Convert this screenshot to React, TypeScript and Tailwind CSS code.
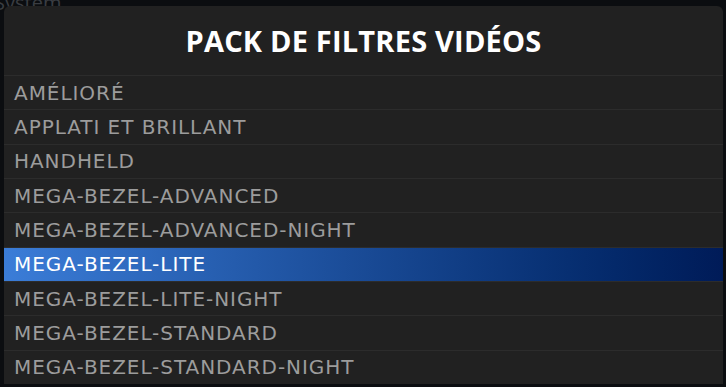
const ITEMS = [
  'AMÉLIORÉ',
  'APPLATI ET BRILLANT',
  'HANDHELD',
  'MEGA-BEZEL-ADVANCED',
  'MEGA-BEZEL-ADVANCED-NIGHT',
  'MEGA-BEZEL-LITE',
  'MEGA-BEZEL-LITE-NIGHT',
  'MEGA-BEZEL-STANDARD',
  'MEGA-BEZEL-STANDARD-NIGHT',
]

const SELECTED = 'MEGA-BEZEL-LITE'

export default function App() {
  return (
    <div
      className="relative h-[387px] w-[726px] overflow-hidden bg-[#0b0d10]"
      style={{ fontFamily: '"Open Sans", "Noto Sans", sans-serif' }}
    >
      {/* what's left of the screen behind the popup */}
      <span className="absolute left-[-6px] top-[-12px] text-[20px] text-[#3a3d42]">System</span>

      <div className="relative ml-[4px] mt-[6px] w-[719px] overflow-hidden rounded-t-[6px] bg-[#212121]">
        <div className="flex h-[69px] items-center justify-center">
          <h1 className="text-[29px] font-bold tracking-[0.2px] text-white">PACK DE FILTRES VIDÉOS</h1>
        </div>
        <ul className="font-['DejaVu_Sans',sans-serif] tracking-[0.95px]">
          {ITEMS.map((item) => {
            const active = item === SELECTED
            return (
              <li
                key={item}
                className={
                  active
                    ? 'flex h-[34.33px] items-center border-t border-[#2c2c2c] bg-gradient-to-r from-[#3b7dd8] to-[#001b58] px-[10px] text-[20px] text-white'
                    : 'flex h-[34.33px] items-center border-t border-[#2c2c2c] px-[10px] text-[20px] text-[#9c9c9c]'
                }
              >
                {item}
              </li>
            )
          })}
        </ul>
      </div>
    </div>
  )
}
